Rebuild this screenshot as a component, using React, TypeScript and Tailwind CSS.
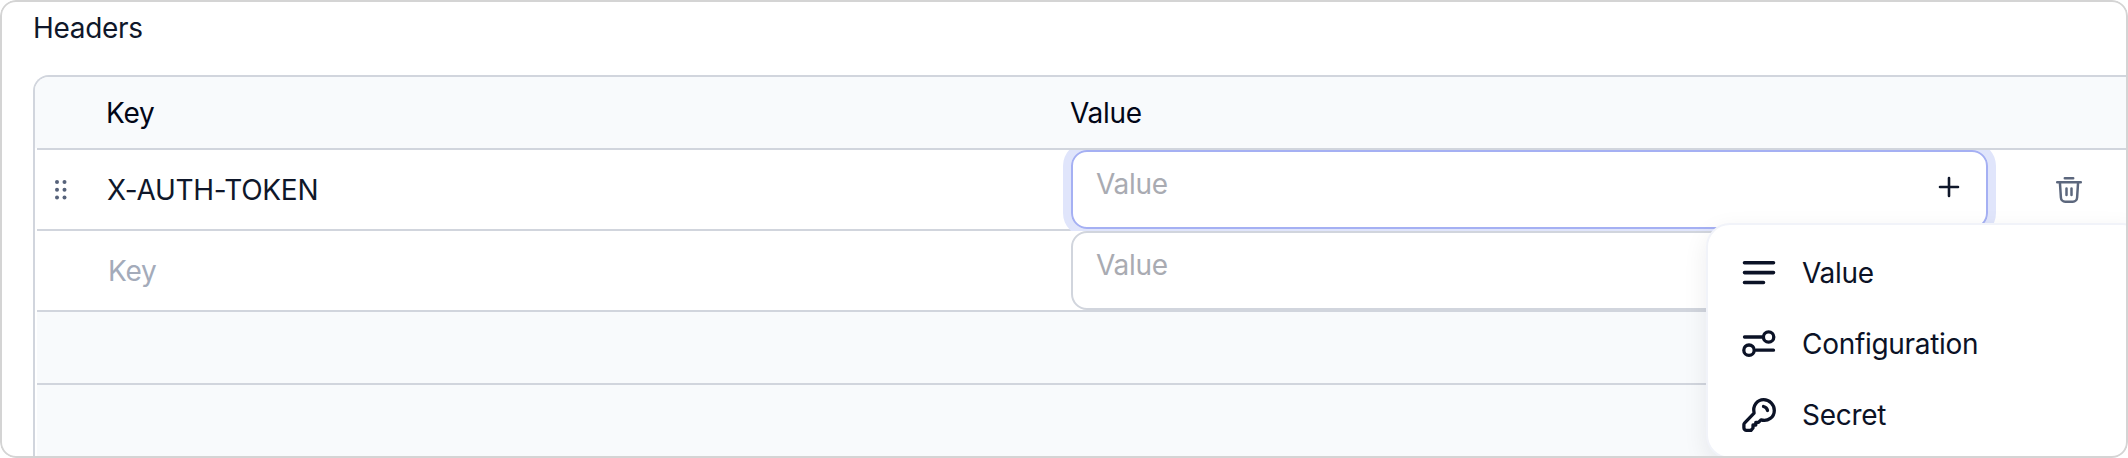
import React from "react";

const HeaderRow = () => (
  <div className="flex h-[71px] items-center bg-[#f8fafc] text-[#020617]">
    <div className="w-[965px] pl-[71px]">Key</div>
    <div className="flex-1 pl-[70px]">Value</div>
  </div>
);

const Rule = () => <div className="ml-[2px] h-[2px] shrink-0 bg-[#d1d5dd]" />;

const GripIcon = () => (
  <svg className="h-5 w-3" viewBox="0 0 12 20" fill="#56627a">
    {[2, 9.5].map((x) => [2, 9.8, 17.6].map((y) => <circle key={`${x}-${y}`} cx={x} cy={y} r="2" />))}
  </svg>
);

const TrashIcon = () => (
  <svg className="h-7 w-7" viewBox="0 0 28 28" fill="none" stroke="#5c677d" strokeWidth="2.5" strokeLinecap="round" strokeLinejoin="round">
    <path d="M9.8 2.200h8.400M2.200 6.300h23.600M4.900 6.300l1 15.200a4.300 4.300 0 0 0 4.300 4.200h7.600a4.300 4.300 0 0 0 4.300-4.200l1-15.200M11.500 12.500v6.500M16.500 12.500v6.500" />
  </svg>
);

const PlusIcon = () => (
  <svg className="h-[22px] w-[22px]" viewBox="0 0 22 22" fill="none" stroke="#0f172a" strokeWidth="2.6" strokeLinecap="round">
    <path d="M11 2v18M2 11h18" />
  </svg>
);

const stroke = {
  fill: "none",
  stroke: "#0b1226",
  strokeWidth: 3.3,
  strokeLinecap: "round" as const,
  strokeLinejoin: "round" as const,
};

const LinesIcon = () => (
  <svg className="h-9 w-9" viewBox="0 0 36 36" {...stroke} strokeWidth={3.6}>
    <path d="M3.500 7.700h29M3.500 17.600h29M3.500 27.500h19" />
  </svg>
);

const SlidersIcon = () => (
  <svg className="h-9 w-9" viewBox="0 0 36 36" {...stroke}>
    <path d="M3.500 11h17.500M15 24.200h17.500" />
    <circle cx="27.600" cy="11" r="5.200" />
    <circle cx="8" cy="24.200" r="5.200" />
  </svg>
);

const KeyIcon = () => (
  <svg className="h-9 w-9" viewBox="0 0 36 36" {...stroke}>
    <path d="M13.100 16.200C11.300 8.600 16.500 2.600 22.600 2.600A10.800 10.800 0 0 1 33.300 13.400C33.300 20.200 27 24.900 20 22.800L17.500 25.300H14.800V28H12V31L10 33.300H5.500C4 33.300 2.900 32.200 2.900 30.700V27.600C2.900 27 3.100 26.500 3.500 26.100Z" />
    <path d="M22.500 9.500c2 .4 3.600 2 4 4" />
  </svg>
);

const MenuItem = ({ icon, label }: { icon: React.ReactNode; label: string }) => (
  <div className="flex h-[71px] items-center gap-[25px] text-[#0b1226]">
    {icon}
    <span>{label}</span>
  </div>
);

export default function App() {
  return (
    <div className="relative flex h-[458px] w-[2128px] flex-col overflow-hidden rounded-[16px] bg-white pl-[33px] font-['Inter',sans-serif] text-[28px] leading-[34px] tracking-[-0.3px]">
      <div className="h-[75px] shrink-0 pt-[11px] text-[#0f172a]">Headers</div>

      <div className="flex h-[400px] shrink-0 flex-col overflow-hidden rounded-tl-[16px] border-t-2 border-l-2 border-[#d1d5dd]">
        <HeaderRow />
        <Rule />
        <div className="flex h-[81px] shrink-0 overflow-hidden">
          <div className="flex w-[1028px] flex-col">
            <div className="flex h-[79px] items-center">
              <div className="flex w-[72px] justify-start pl-[20px]"><GripIcon /></div>
              <span className="text-[#0f172a]">X-AUTH-TOKEN</span>
            </div>
            <Rule />
          </div>
          <div className="flex flex-1 border-b-2 border-[#d1d5dd]">
            <div className="ml-[8px] flex h-[79px] w-[917px] shrink-0 justify-between rounded-[16px] border-2 border-[#a5b0f3] pt-[15px] pr-[26px] pl-[23px] text-[#a9abb2] shadow-[0_0_0_8px_#e0e5fb]">
              <span>Value</span>
              <span className="pt-[9px]"><PlusIcon /></span>
            </div>
            <div className="flex flex-1 items-center pl-[67px]"><TrashIcon /></div>
          </div>
        </div>
        <div className="flex h-[79px] shrink-0">
          <div className="flex w-[1036px] items-center pl-[73px] text-[#a4abba]">Key</div>
          <div className="h-[79px] w-[917px] rounded-[16px] border-2 border-[#d1d5dd] pt-[15px] pl-[23px] text-[#a9abb2]">Value</div>
        </div>
        <Rule />
        <div className="ml-[2px] h-[71px] shrink-0 bg-[#f8fafc]" />
        <Rule />
        <div className="ml-[2px] h-[80px] shrink-0 bg-[#f8fafc]" />
      </div>

      <div className="absolute top-[223px] left-[1706px] flex h-[236px] w-[440px] flex-col rounded-[24px] border-2 border-[#f1f3f9] bg-white pt-[12px] pl-[33px] shadow-[0_8px_24px_rgba(15,23,42,0.08)]">
        <MenuItem icon={<LinesIcon />} label="Value" />
        <MenuItem icon={<SlidersIcon />} label="Configuration" />
        <MenuItem icon={<KeyIcon />} label="Secret" />
      </div>

      <div className="pointer-events-none absolute inset-0 rounded-[16px] border-2 border-[#d4d4d4]" />
    </div>
  );
}
